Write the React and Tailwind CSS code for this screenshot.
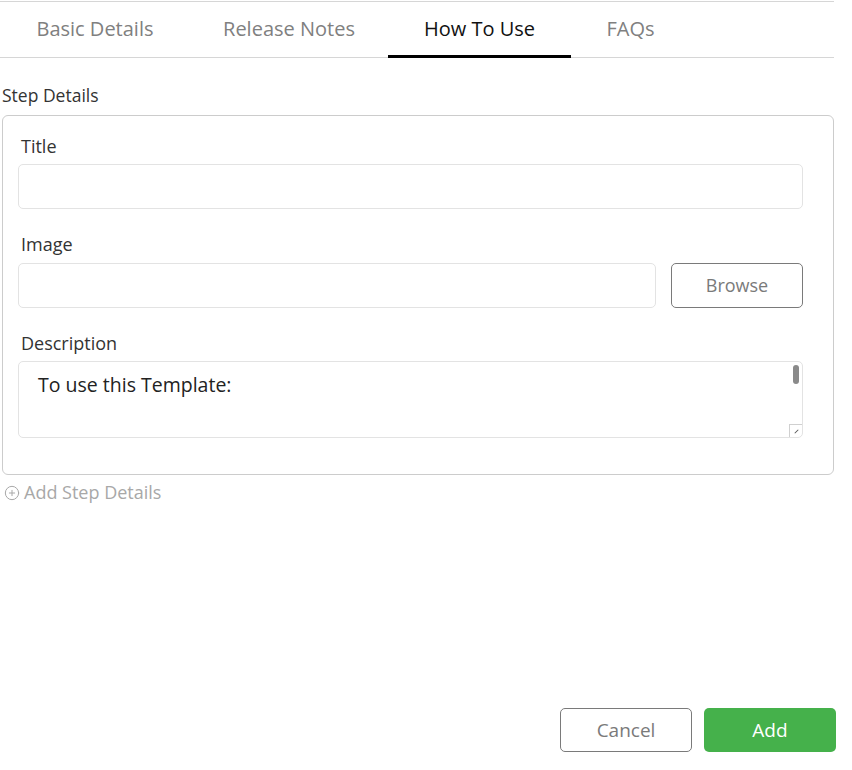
import { CirclePlus } from 'lucide-react';

const tabs = [
  { label: 'Basic Details', w: 'w-[190px]' },
  { label: 'Release Notes', w: 'w-[198px]' },
  { label: 'How To Use', w: 'w-[183px]', active: true },
  { label: 'FAQs', w: 'w-[119px]' },
];

function Label({ children }) {
  return <div className="pl-[3px] h-[24px] leading-[24px] text-[18px] text-[#333]">{children}</div>;
}

export default function App() {
  return (
    <div className="w-[852px] h-[770px] bg-white flex flex-col font-['Open_Sans',sans-serif]">
      {/* tabs */}
      <div className="mt-px w-[834px] h-[57px] flex border-t border-b border-[#d6d6d6]">
        {tabs.map((t) => (
          <div
            key={t.label}
            className={
              t.active
                ? `${t.w} flex items-center justify-center text-[20px] text-[#111] border-b-[3px] border-black -mb-px pt-[1px]`
                : `${t.w} flex items-center justify-center text-[20px] text-[#808080] pb-[2px]`
            }
          >
            {t.label}
          </div>
        ))}
      </div>

      <div className="pl-[2px] mt-[25px] h-[24px] leading-[24px] text-[17.5px] text-[#333]">Step Details</div>

      {/* step card */}
      <div className="ml-[2px] mt-[8px] w-[832px] h-[360px] border border-[#cccccc] rounded-[6px] pl-[15px] pr-[30px] pt-[18px]">
        <Label>Title</Label>
        <div className="mt-[6px] h-[45px] border border-[#e3e3e3] rounded-[5px]" />

        <div className="mt-[23px]">
          <Label>Image</Label>
        </div>
        <div className="mt-[7px] flex gap-[15px]">
          <div className="flex-1 h-[45px] border border-[#e3e3e3] rounded-[5px]" />
          <button className="w-[132px] h-[45px] border border-[#7a7a7a] rounded-[5px] text-[18px] text-[#7a7a7a]">
            Browse
          </button>
        </div>

        <div className="mt-[23px]">
          <Label>Description</Label>
        </div>
        <div className="relative mt-[6px] h-[77px] border border-[#e3e3e3] rounded-[5px] pl-[19px] pt-[10px]">
          <div className="text-[19.5px] leading-[26px] text-[#222]">To use this Template:</div>
          <div className="absolute right-[3px] top-[3px] w-[6px] h-[19px] rounded-full bg-[#8a8a8a]" />
          <div className="absolute right-0 bottom-0 w-[13px] h-[13px] border-l border-t border-[#d0d0d0] flex items-center justify-center">
            <div className="w-[5px] h-[1px] bg-[#555] -rotate-45" />
          </div>
        </div>
      </div>

      <div className="mt-[4px] pl-[4px] flex items-center gap-[4px] text-[18px] text-[#a8a8a8]">
        <CirclePlus size={16} strokeWidth={1.5} />
        <span>Add Step Details</span>
      </div>

      {/* footer */}
      <div className="mt-auto mb-[18px] mr-[16px] flex justify-end gap-[12px]">
        <button className="w-[132px] h-[44px] border border-[#7a7a7a] rounded-[5px] text-[19px] text-[#7a7a7a]">
          Cancel
        </button>
        <button className="w-[132px] h-[44px] rounded-[5px] bg-[#45b14b] text-[19px] text-white">
          Add
        </button>
      </div>
    </div>
  );
}
